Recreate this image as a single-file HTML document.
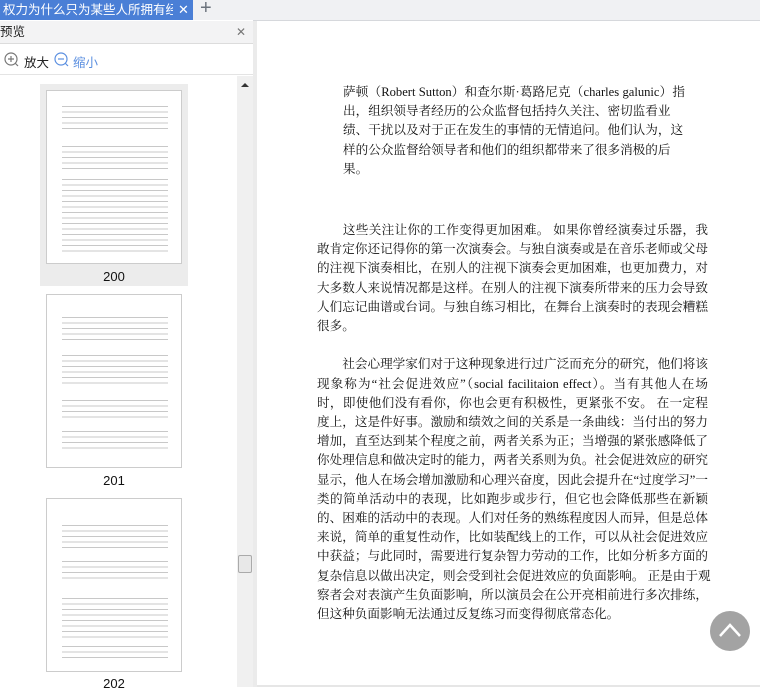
<!DOCTYPE html>
<html><head><meta charset="utf-8"><style>
*{margin:0;padding:0;box-sizing:border-box}
body{width:760px;height:687px;overflow:hidden;background:#fff;position:relative;font-family:"Liberation Sans","Noto Sans CJK SC",sans-serif}
.abs{position:absolute}
.tabbar{left:0;top:0;width:760px;height:21px;background:#f0f1f3;border-bottom:1px solid #d6d8dc}
.tab{left:0;top:0;width:193px;height:20px;background:#4a7fd6;color:#fff;font-size:12.5px;line-height:20px;padding-left:3px;white-space:nowrap;overflow:hidden}
.left{left:0;top:20px;width:253px;height:667px;background:#fff}
.hdr{left:0;top:21px;width:253px;height:23px;background:#f3f3f4;border-bottom:1px solid #dcdcdc;font-size:12.5px;line-height:23px;color:#222}
.tool{left:0;top:45px;width:253px;height:30px;border-bottom:1px solid #e4e4e4;font-size:12.5px}
.sb{left:237px;top:76px;width:16px;height:611px;background:#f0f0f0}
.thumb{position:absolute;left:46px;width:136px;height:174px;background:#fff;border:1px solid #ccc}
.blk{position:absolute;left:15px;width:106px;background:repeating-linear-gradient(#fff 0,#fff 2px,#c8c8c8 2px,#c8c8c8 3px,#fff 3px,#fff 5.5px)}
.lbl{position:absolute;left:46px;width:136px;text-align:center;font-size:13px;color:#111}
.main{left:253px;top:21px;width:507px;height:666px;background:#fff;border-left:4px solid #ebebeb}
.txt{font-family:"Liberation Serif","Noto Serif CJK SC",serif;font-size:12.6px;color:#111;line-height:19.2px}
.txt div{text-align:justify;text-align-last:justify;white-space:nowrap}
.txt div.l{text-align-last:left}
</style></head><body>
<div class="abs tabbar"></div>
<div class="abs tab"><span style="display:inline-block;width:170px;overflow:hidden;vertical-align:top">权力为什么只为某些人所拥有经验</span><span style="position:absolute;left:178px;top:0;font-size:13px">✕</span></div>
<div class="abs" style="left:200px;top:-3px;font-size:20px;color:#6b737c">+</div>
<div class="abs left"></div>
<div class="abs hdr">预览<span style="position:absolute;left:236px;top:0;color:#777;font-size:12px">✕</span></div>
<div class="abs tool">
<svg class="abs" style="left:4px;top:7px" width="15" height="15"><circle cx="7" cy="7" r="6" fill="none" stroke="#777" stroke-width="1.2"/><path d="M4 7h6M7 4v6" stroke="#777" stroke-width="1.2"/><path d="M11 11l3 3" stroke="#777" stroke-width="1.2"/></svg>
<span class="abs" style="left:24px;top:7px;color:#222">放大</span>
<svg class="abs" style="left:54px;top:7px" width="15" height="15"><circle cx="7" cy="7" r="6" fill="none" stroke="#5b8fe0" stroke-width="1.2"/><path d="M4 7h6" stroke="#5b8fe0" stroke-width="1.2"/><path d="M11 11l3 3" stroke="#5b8fe0" stroke-width="1.2"/></svg>
<span class="abs" style="left:73px;top:7px;color:#5b8fe0">缩小</span>
</div>
<div class="abs" style="left:40px;top:84px;width:148px;height:202px;background:#ececec"></div>
<div class="thumb" style="top:90px"><div class="blk" style="top:13px;height:28px"></div><div class="blk" style="top:53px;height:28px"></div><div class="blk" style="top:86px;height:78px"></div></div>
<div class="lbl" style="top:269px">200</div>
<div class="thumb" style="top:294px"><div class="blk" style="top:20px;height:28px"></div><div class="blk" style="top:58px;height:34px"></div><div class="blk" style="top:103px;height:20px"></div><div class="blk" style="top:134px;height:23px"></div></div>
<div class="lbl" style="top:473px">201</div>
<div class="thumb" style="top:498px"><div class="blk" style="top:24px;height:28px"></div><div class="blk" style="top:60px;height:23px"></div><div class="blk" style="top:97px;height:45px"></div><div class="blk" style="top:145px;height:14px"></div></div>
<div class="lbl" style="top:676px">202</div>
<div class="abs sb"></div>
<div class="abs" style="left:241px;top:83px;width:0;height:0;border-left:4px solid transparent;border-right:4px solid transparent;border-bottom:4px solid #333"></div>
<div class="abs" style="left:238px;top:555px;width:14px;height:18px;background:#e8e8e8;border:1px solid #aaa;border-radius:2px"></div>
<div class="abs main"></div>
<div class="abs txt" style="left:343px;top:83px;width:342px">
<div>萨顿（Robert Sutton）和查尔斯·葛路尼克（charles galunic）指</div>
<div class="l">出，组织领导者经历的公众监督包括持久关注、密切监看业</div>
<div class="l">绩、干扰以及对于正在发生的事情的无情追问。他们认为，这</div>
<div class="l">样的公众监督给领导者和他们的组织都带来了很多消极的后</div>
<div class="l">果。</div>
</div>
<div class="abs txt" style="left:317px;top:221px;width:391px">
<div>　　这些关注让你的工作变得更加困难。 如果你曾经演奏过乐器，我</div>
<div>敢肯定你还记得你的第一次演奏会。与独自演奏或是在音乐老师或父母</div>
<div>的注视下演奏相比，在别人的注视下演奏会更加困难，也更加费力，对</div>
<div>大多数人来说情况都是这样。在别人的注视下演奏所带来的压力会导致</div>
<div>人们忘记曲谱或台词。与独自练习相比，在舞台上演奏时的表现会糟糕</div>
<div class="l">很多。</div>
<div style="height:19.2px"></div>
<div>　　社会心理学家们对于这种现象进行过广泛而充分的研究，他们将该</div>
<div>现象称为“社会促进效应”（social facilitaion effect）。当有其他人在场</div>
<div>时，即使他们没有看你，你也会更有积极性，更紧张不安。 在一定程</div>
<div>度上，这是件好事。激励和绩效之间的关系是一条曲线：当付出的努力</div>
<div>增加，直至达到某个程度之前，两者关系为正；当增强的紧张感降低了</div>
<div>你处理信息和做决定时的能力，两者关系则为负。社会促进效应的研究</div>
<div>显示，他人在场会增加激励和心理兴奋度，因此会提升在“过度学习”一</div>
<div>类的简单活动中的表现，比如跑步或步行，但它也会降低那些在新颖</div>
<div>的、困难的活动中的表现。人们对任务的熟练程度因人而异，但是总体</div>
<div>来说，简单的重复性动作，比如装配线上的工作，可以从社会促进效应</div>
<div>中获益；与此同时，需要进行复杂智力劳动的工作，比如分析多方面的</div>
<div>复杂信息以做出决定，则会受到社会促进效应的负面影响。 正是由于观</div>
<div>察者会对表演产生负面影响，所以演员会在公开亮相前进行多次排练，</div>
<div class="l">但这种负面影响无法通过反复练习而变得彻底常态化。</div>
</div>
<svg class="abs" style="left:710px;top:611px" width="40" height="40"><circle cx="20" cy="20" r="20" fill="#a3a3a3"/><path d="M10 25L20 14L30 25" fill="none" stroke="#fff" stroke-width="2.5"/></svg>
<div class="abs" style="left:257px;top:685px;width:503px;height:2px;background:#e6e6e6"></div>
</body></html>
